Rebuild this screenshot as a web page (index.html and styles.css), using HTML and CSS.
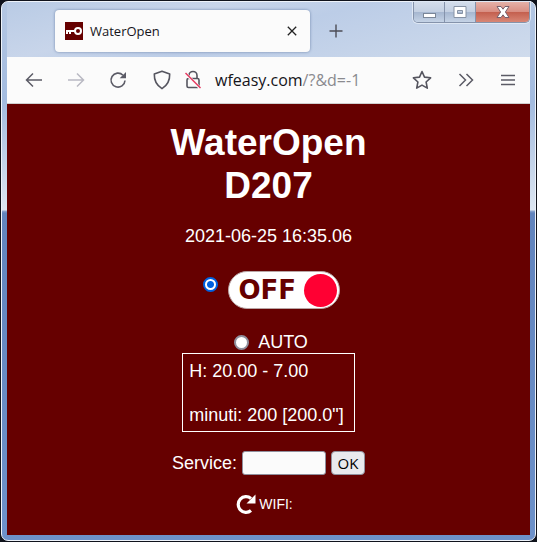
FILE: index.html
```html
<!DOCTYPE html>
<html lang="it">
<head>
  <meta charset="UTF-8">
  <meta name="viewport" content="width=device-width, initial-scale=1.0">
  <title>WaterOpen</title>
  <link rel="stylesheet" href="styles.css">
</head>
<body>
  <div class="window">
    <header class="tab-bar">
      <div class="tab">
        <svg class="favicon" width="18" height="18" viewBox="0 0 18 18">
          <rect width="18" height="18" fill="#660000"/>
          <circle cx="13" cy="9" r="3" fill="none" stroke="#fff" stroke-width="2"/>
          <path d="M10 9H1M2 9v3M5 9v3" fill="none" stroke="#fff" stroke-width="2"/>
        </svg>
        <span class="tab-title">WaterOpen</span>
        <button class="icon-btn tab-close" aria-label="Chiudi scheda">
          <svg width="10" height="10" viewBox="0 0 10 10"><path d="M.8.8l8.4 8.4M9.2.8L.8 9.2" stroke="#222" stroke-width="1.3"/></svg>
        </button>
      </div>
      <button class="icon-btn new-tab" aria-label="Nuova scheda">
        <svg width="14" height="14" viewBox="0 0 14 14"><path d="M7 .5v13M.5 7h13" stroke="#4c4c55" stroke-width="1.4"/></svg>
      </button>
      <div class="window-buttons">
        <button class="win-btn" aria-label="Riduci">
          <svg width="14" height="14" viewBox="0 0 14 14"><rect x="1.500" y="8.500" width="12" height="4" fill="#fff" stroke="#7b8798"/></svg>
        </button>
        <button class="win-btn" aria-label="Ingrandisci">
          <svg width="14" height="14" viewBox="0 0 14 14"><path fill="#fff" fill-rule="evenodd" stroke="#8692a4" d="M1 1.500h12v11H1zM4.500 5.500v3h5v-3z"/></svg>
        </button>
        <button class="win-btn win-close" aria-label="Chiudi">
          <svg width="14" height="14" viewBox="0 0 14 14"><path fill="#fff" stroke="#775f6b" d="M1 1.500h4l2 2.700 2-2.700h4L9.400 7l3.600 5.500H9L7 9.800 5 12.500H1L4.600 7z"/></svg>
        </button>
      </div>
    </header>

    <nav class="toolbar">
      <button class="icon-btn" aria-label="Indietro">
        <svg width="18" height="16" viewBox="0 0 18 16"><path d="M17 8H1.500M8 1.500L1.500 8 8 14.500" fill="none" stroke="#5b5b66" stroke-width="1.500"/></svg>
      </button>
      <button class="icon-btn" aria-label="Avanti" disabled>
        <svg width="18" height="16" viewBox="0 0 18 16"><path d="M1 8h15.500M10 1.500L16.500 8 10 14.500" fill="none" stroke="#b9b9c3" stroke-width="1.500"/></svg>
      </button>
      <button class="icon-btn" aria-label="Ricarica">
        <svg width="18" height="18" viewBox="0 0 18 18">
          <path d="M14 4.200A7 7 0 1 0 16 9.500" fill="none" stroke="#5b5b66" stroke-width="1.600"/>
          <path d="M17 1v6.300h-6.300z" fill="#5b5b66"/>
        </svg>
      </button>
      <div class="url-bar">
        <svg width="18" height="20" viewBox="0 0 18 20"><path d="M9 1.200l7.700 2.800c.2 6-1.700 11-7.700 14.600C3 15 1.100 10 1.300 4z" fill="none" stroke="#55555f" stroke-width="1.600" stroke-linejoin="round"/></svg>
        <svg width="16" height="20" viewBox="0 0 16 20">
          <rect x="2" y="8.500" width="12" height="9" rx="1.500" fill="none" stroke="#55555f" stroke-width="1.600"/>
          <path d="M4 8.500V5.500a4 4 0 0 1 8 0v3" fill="none" stroke="#55555f" stroke-width="1.600"/>
          <path d="M.5 3.500l14.500 14.500" stroke="#fbfbfb" stroke-width="3"/>
          <path d="M.5 3l15 15" stroke="#e5365d" stroke-width="1.500"/>
        </svg>
        <div class="url" role="textbox" contenteditable="true" spellcheck="false" aria-label="Indirizzo">wfeasy.com<span class="url-path">/?&amp;d=-1</span></div>
        <button class="icon-btn" aria-label="Aggiungi ai segnalibri">
          <svg width="20" height="20" viewBox="0 0 20 20"><path d="M10 1.500l2.500 5.600 6.100.7-4.500 4.200 1.200 6.100L10 15.100l-5.300 3 1.200-6.100L1.400 7.800l6.100-.7z" fill="none" stroke="#55555f" stroke-width="1.600" stroke-linejoin="round"/></svg>
        </button>
      </div>
      <button class="icon-btn" aria-label="Altri strumenti">
        <svg width="16" height="14" viewBox="0 0 16 14"><path d="M1.500 1l6 6-6 6M8.500 1l6 6-6 6" fill="none" stroke="#5b5b66" stroke-width="1.500"/></svg>
      </button>
      <button class="icon-btn menu" aria-label="Menu">
        <svg width="14" height="12" viewBox="0 0 14 12"><path d="M0 1.500h14M0 6h14M0 10.500h14" stroke="#5b5b66" stroke-width="1.300"/></svg>
      </button>
    </nav>

    <main class="page">
      <h1>WaterOpen<br>D207</h1>
      <p class="date">2021-06-25 16:35.06</p>

      <form class="controls">
        <div class="mode mode-off">
          <input type="radio" name="mode" id="off" checked>
          <label for="off" class="switch">OFF<span class="knob"></span></label>
        </div>

        <div class="mode">
          <input type="radio" name="mode" id="auto">
          <label for="auto">AUTO</label>
        </div>

        <div class="schedule">
          <p>H: 20.00 - 7.00</p>
          <p>minuti: 200 [200.0"]</p>
        </div>

        <div class="service">
          <label for="service">Service:</label>
          <input type="text" id="service" name="service">
          <button type="submit">OK</button>
        </div>
      </form>

      <a href="#" class="wifi">
        <svg width="20" height="20" viewBox="0 0 20 20">
          <path d="M15 4.500A7.800 7.800 0 1 0 15 16.500" fill="none" stroke="#fff" stroke-width="3.200"/>
          <path d="M19.500.5v9h-9z" fill="#fff"/>
        </svg>
        WIFI:
      </a>
    </main>
  </div>
</body>
</html>
```
FILE: styles.css
```css
* {
  margin: 0;
  padding: 0;
  box-sizing: border-box;
}

body {
  background-color: #10131c;
  padding: 1px;
  font-family: "Liberation Sans", Arial, sans-serif;
}

.window {
  display: flex;
  flex-direction: column;
  min-height: calc(100vh - 2px);
  padding: 0 5px 5px;
  border: 1px solid #eef3fa;
  border-radius: 7px;
  background: linear-gradient(#b4c7e3 0, #a3bbdf 100px, #dde6f1 208px, #8ea6ce 209px, #6284bd 211px, #6d91c9 100%);
}

/* barra delle schede */
.tab-bar {
  display: flex;
  align-items: flex-start;
  height: 55px;
  background: linear-gradient(165deg, #b9cbe5 0, #c8d5ea 30%, #bccde7 50%, #cfdbec 100%);
}

.tab {
  display: flex;
  align-items: center;
  flex: 0 1 255px;
  height: 42px;
  margin: 8px 0 0 48px;
  padding: 0 13px 0 10px;
  background-color: #fbfbfb;
  border-radius: 4px;
  box-shadow: 0 0 3px #6f86ab;
}

.tab-title {
  flex: 1;
  margin-left: 7px;
  font-family: "Open Sans", "Noto Sans", sans-serif;
  font-size: 13px;
  color: #15141a;
}

.icon-btn {
  display: flex;
  align-items: center;
  justify-content: center;
  border: 0;
  background: none;
  cursor: pointer;
}

.new-tab {
  height: 42px;
  margin: 8px 0 0 19px;
}

.window-buttons {
  display: flex;
  height: 21px;
  margin-left: auto;
  border: 1px solid #8593ab;
  border-top: 0;
  border-radius: 0 0 5px 5px;
  box-shadow: 0 0 0 1px #dfe8f4;
  overflow: hidden;
}

.win-btn {
  display: flex;
  align-items: center;
  justify-content: center;
  width: 31px;
  border: 0;
  border-right: 1px solid #8593ab;
  background: linear-gradient(#d3ddeb 0, #c4d0e2 48%, #a6b7d0 52%, #c5d3e6 100%);
}

.win-close {
  width: 53px;
  border-right: 0;
  background: linear-gradient(#e5b1a8 0, #d98f83 48%, #c4604f 52%, #d88675 100%);
}

/* barra degli strumenti */
.toolbar {
  display: flex;
  align-items: center;
  gap: 24px;
  height: 47px;
  padding: 0 15px 0 18px;
  background-color: #fbfbfb;
  border-bottom: 1px solid #cfcfcf;
}

.url-bar {
  display: flex;
  align-items: center;
  flex: 1;
  gap: 14px;
  min-width: 0;
  margin: 0 2px;
}

.url {
  flex: 1;
  min-width: 0;
  font-family: "Open Sans", "Noto Sans", sans-serif;
  font-size: 16px;
  line-height: 22px;
  white-space: nowrap;
  color: #15141a;
}

.url-path {
  color: #8a8a8f;
}

.menu {
  margin-left: 3px;
}

/* pagina */
.page {
  flex: 1;
  padding: 17px 10px 18px;
  background-color: #660000;
  color: #fff;
  font-size: 18px;
  line-height: 22px;
  text-align: center;
}

h1 {
  font-size: 37px;
  line-height: 43px;
}

.date {
  margin-top: 18px;
}

.controls {
  display: flex;
  flex-direction: column;
  align-items: center;
  margin-top: 24px;
}

.mode {
  display: flex;
  align-items: center;
  gap: 9px;
}

.mode input {
  appearance: none;
  width: 15px;
  height: 15px;
  margin-left: 5px;
  border: 2px solid #8f8f9d;
  border-radius: 50%;
  background-color: #fff;
}

.mode input:checked {
  border-color: #0060df;
  background: radial-gradient(#0060df 3px, #fff 4px);
}

.mode-off {
  align-items: flex-start;
  gap: 10px;
  margin-bottom: 22px;
}

.mode-off input {
  margin-top: 6px;
}

.switch {
  display: flex;
  align-items: center;
  justify-content: space-between;
  width: 112px;
  height: 38px;
  padding: 0 2px 0 10px;
  border: 1px solid #b9a5a5;
  border-radius: 19px;
  background-color: #fff;
  color: #660000;
  font-family: "DejaVu Sans", Verdana, sans-serif;
  font-size: 26px;
  font-weight: bold;
}

.knob {
  width: 33px;
  height: 33px;
  border-radius: 50%;
  background-color: #ff0033;
}

.schedule {
  display: grid;
  gap: 22px;
  padding: 6px 10px 5px 6px;
  border: 1px solid #fff;
  text-align: left;
}

.service {
  display: flex;
  align-items: center;
  gap: 5px;
  margin-top: 19px;
}

.service input {
  width: 84px;
  height: 24px;
  padding: 0 4px;
  border: 1px solid #8f8f9d;
  border-radius: 3px;
  background-color: #fbfbfb;
}

.service button {
  width: 34px;
  height: 24px;
  border: 1px solid #8f8f9d;
  border-radius: 4px;
  background-color: #e9e9ed;
  font-family: "Open Sans", "Noto Sans", sans-serif;
  font-size: 15px;
  line-height: 20px;
}

.wifi {
  display: flex;
  align-items: center;
  justify-content: center;
  gap: 3px;
  margin-top: 18px;
  padding-right: 8px;
  color: #fff;
  font-size: 14px;
  text-decoration: none;
}
```
